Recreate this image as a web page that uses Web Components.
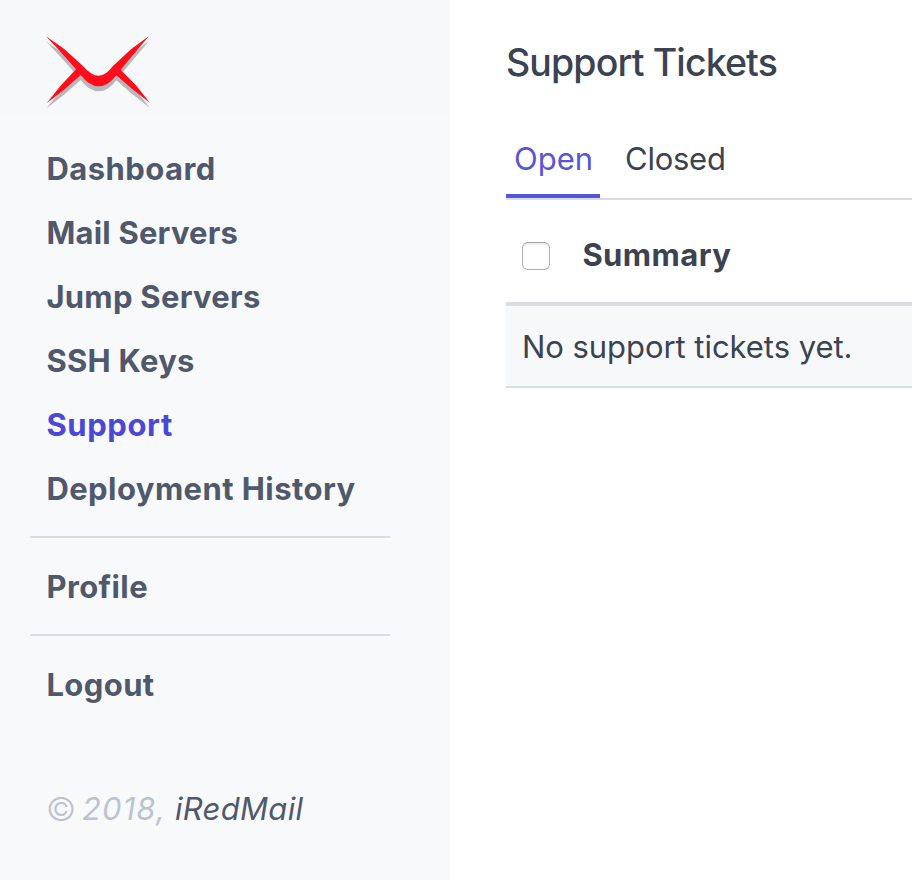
<!DOCTYPE html>
<html lang="en">
<head>
<meta charset="utf-8">
<title>Support Tickets</title>
<style>
html, body { margin: 0; height: 100%; overflow: hidden; background: #fff; }
body { font-family: Inter, "Liberation Sans", sans-serif; font-size: 31px; color: #3b4351; }
</style>
</head>
<body>
<app-shell>
  <side-bar slot="side">
    <nav-item style="--track:.46px">Dashboard</nav-item>
    <nav-item style="--track:.2px">Mail Servers</nav-item>
    <nav-item style="--track:.27px">Jump Servers</nav-item>
    <nav-item style="--track:.28px">SSH Keys</nav-item>
    <nav-item active style="--track:.6px">Support</nav-item>
    <nav-item style="--track:.43px">Deployment History</nav-item>
    <nav-divider></nav-divider>
    <nav-item style="--track:.4px">Profile</nav-item>
    <nav-divider></nav-divider>
    <nav-item style="--track:.4px">Logout</nav-item>
  </side-bar>
  <page-title>Support Tickets</page-title>
  <tab-bar>
    <tab-item active>Open</tab-item>
    <tab-item>Closed</tab-item>
  </tab-bar>
  <ticket-table heading="Summary">No support tickets yet.</ticket-table>
</app-shell>
<script>
const define = (name, markup, setup) => customElements.define(name, class extends HTMLElement {
  constructor() {
    super();
    const t = document.createElement('template');
    t.innerHTML = markup;
    this.attachShadow({ mode: 'open' }).append(t.content.cloneNode(true));
  }
  connectedCallback() { if (setup) setup(this, this.shadowRoot); }
});

define('app-shell', `
<style>
:host { display: grid; grid-template-columns: 450px 1fr; height: 100vh; }
main { padding: 39px 0 0 56px; min-width: 0; }
</style>
<slot name="side"></slot><main><slot></slot></main>`);

define('brand-logo', `
<style>
:host { display: block; width: 104px; height: 73px; }
svg { display: block; width: 100%; height: 100%; }
.shade { fill: #b7b8ba; }
.mark { fill: #ff0d1b; }
</style>
<svg viewBox="48 46 312 219" aria-hidden="true">
  <defs><path id="wing" d="M48 47 L103 85 L158 135 Q184 165 206 165 Q228 165 248 137 L303 86 L357 46 L317 93 L272 147 L318 194 L360 247 L304 203 L259 164 Q234 197 206 197 Q178 197 152 163 L104 206 L50 248 L91 196 L138 146 L92 94 Z"/></defs>
  <use href="#wing" class="shade" y="15"/>
  <use href="#wing" class="mark"/>
</svg>`);

define('side-bar', `
<style>
:host { display: flex; flex-direction: column; background: #f8f9fb; }
header { height: 115px; padding: 36px 46px 0; box-sizing: border-box; background: #f7f8fa; }
nav { display: flex; flex-direction: column; padding: 22px 60px 0 30px; }
footer { padding: 60px 47px 0 46px; line-height: 64px; font-style: italic; color: #bcc3ce; white-space: nowrap; display: flex; }
.mark { width: 36px; font-style: normal; font-weight: 300; font-size: 33px; }
.year { width: 93px; letter-spacing: 1.1px; }
a { color: #50596c; letter-spacing: .3px; }
</style>
<header><brand-logo></brand-logo></header>
<nav><slot></slot></nav>
<footer><span class="mark">©</span><span class="year">2018,</span><a>iRedMail</a></footer>`);

define('nav-item', `
<style>
:host { display: block; padding-left: 16.4px; line-height: 64px; font-weight: 680; color: #50596c; letter-spacing: var(--track, 0); white-space: nowrap; }
:host([active]) { color: #4b48d6; }
</style><slot></slot>`);

define('nav-divider', `
<style>:host { display: block; height: 2px; margin: 15px 0 17px; background: #dadce4; }</style>`);

define('page-title', `
<style>:host { display: block; font-size: 37.5px; font-weight: 500; line-height: 48px; letter-spacing: -.87px; white-space: nowrap; }</style><slot></slot>`);

define('tab-bar', `
<style>:host { display: flex; gap: 17px; margin-top: 33px; border-bottom: 2px solid #dadee4; }</style><slot></slot>`);

define('tab-item', `
<style>
:host { display: block; box-sizing: border-box; height: 78px; padding: 7px 8px 0; line-height: 64px; letter-spacing: -.25px; border-bottom: 4px solid transparent; }
:host([active]) { width: 94px; color: #5755d9; border-color: #5755d9; letter-spacing: 0; }
</style><slot></slot>`);

define('ticket-table', `
<style>
:host { display: block; }
.head { display: flex; align-items: center; height: 102px; padding: 0 16px; border-bottom: 4px solid #dadce4; font-weight: 700; }
.box { box-sizing: border-box; width: 28px; height: 28px; margin: 10px 32.4px 0 0; border: 1px solid #b4b4b4; border-top-color: #a2a2a2; border-radius: 6px; background: #fff; box-shadow: inset 0 2px 2px #ececec; }
.label { line-height: 64px; margin-top: 8px; letter-spacing: .42px; }
.row { height: 80px; padding-left: 16px; line-height: 82px; background: #f7f8fa; border-bottom: 2px solid #dadce4; letter-spacing: -.05px; }
</style>
<div class="head"><span class="box" role="checkbox" aria-checked="false"></span><span class="label"></span></div>
<div class="row"><slot></slot></div>`, (el, root) => {
  root.querySelector('.label').textContent = el.getAttribute('heading');
});
</script>
</body>
</html>
